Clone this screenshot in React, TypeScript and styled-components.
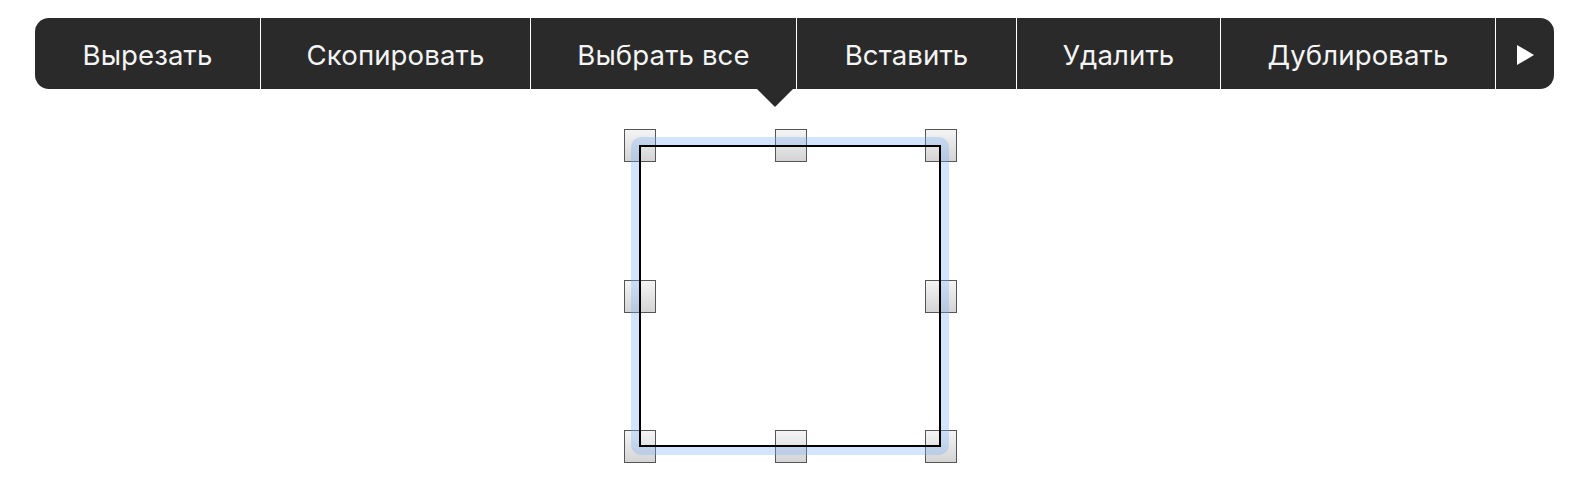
import React from 'react';
import styled, { createGlobalStyle } from 'styled-components';

const GlobalStyle = createGlobalStyle`
  html, body {
    margin: 0;
    padding: 0;
    background: #ffffff;
  }
`;

const Page = styled.div`
  width: 1580px;
  height: 483px;
  padding: 18px 0 0 35px;
  box-sizing: border-box;
  overflow: hidden;
`;

const Menu = styled.div`
  position: relative;
  display: flex;
  width: 1519px;
  height: 71px;
  background: #2a2a2a;
  border-radius: 14px;
`;

const MenuItem = styled.div<{ $width: number; $last?: boolean }>`
  display: flex;
  align-items: center;
  justify-content: center;
  width: ${(p) => p.$width}px;
  flex: none;
  box-sizing: border-box;
  padding-top: 2px;
  border-right: ${(p) => (p.$last ? 'none' : '1px solid #ffffff')};
  color: #f4f4f4;
  font-family: Inter, 'Noto Sans', sans-serif;
  font-size: 27.6px;
  letter-spacing: 0.1px;
`;

const MoreArrow = styled.div`
  width: 0;
  height: 0;
  border-top: 10.5px solid transparent;
  border-bottom: 10.5px solid transparent;
  border-left: 17px solid #ffffff;
`;

const Pointer = styled.div`
  position: absolute;
  left: 722px;
  top: 71px;
  width: 0;
  height: 0;
  border-left: 18px solid transparent;
  border-right: 18px solid transparent;
  border-top: 18px solid #2a2a2a;
`;

const Stage = styled.div`
  margin: 56px 0 0 604px;
  position: relative;
  width: 302px;
  height: 302px;
`;

const HandleGrid = styled.div`
  position: absolute;
  inset: -16px -16px -16px -15px;
  display: grid;
  grid-template-columns: repeat(3, 32px);
  grid-template-rows: repeat(3, 33px);
  justify-content: space-between;
  align-content: space-between;
`;

const Handle = styled.div<{ $hidden?: boolean }>`
  box-sizing: border-box;
  border: 1.5px solid #555555;
  background: linear-gradient(#f4f4f4, #d4d4d4);
  visibility: ${(p) => (p.$hidden ? 'hidden' : 'visible')};
`;

const SelectionBand = styled.div`
  position: absolute;
  inset: -8px;
  border: 8px solid rgba(120, 175, 245, 0.33);
  border-radius: 10px;
`;

const Outline = styled.div`
  position: absolute;
  inset: 0;
  border: 2px solid #000000;
`;

const items = [
  { label: 'Вырезать', width: 226 },
  { label: 'Скопировать', width: 270 },
  { label: 'Выбрать все', width: 266 },
  { label: 'Вставить', width: 220 },
  { label: 'Удалить', width: 204 },
  { label: 'Дублировать', width: 275 },
];

function App() {
  return (
    <Page>
      <GlobalStyle />
      <Menu>
        {items.map((item) => (
          <MenuItem key={item.label} $width={item.width}>
            {item.label}
          </MenuItem>
        ))}
        <MenuItem $width={58} $last>
          <MoreArrow />
        </MenuItem>
        <Pointer />
      </Menu>
      <Stage>
        <HandleGrid>
          {Array.from({ length: 9 }).map((_, i) => (
            <Handle key={i} $hidden={i === 4} />
          ))}
        </HandleGrid>
        <SelectionBand />
        <Outline />
      </Stage>
    </Page>
  );
}

export default App;
